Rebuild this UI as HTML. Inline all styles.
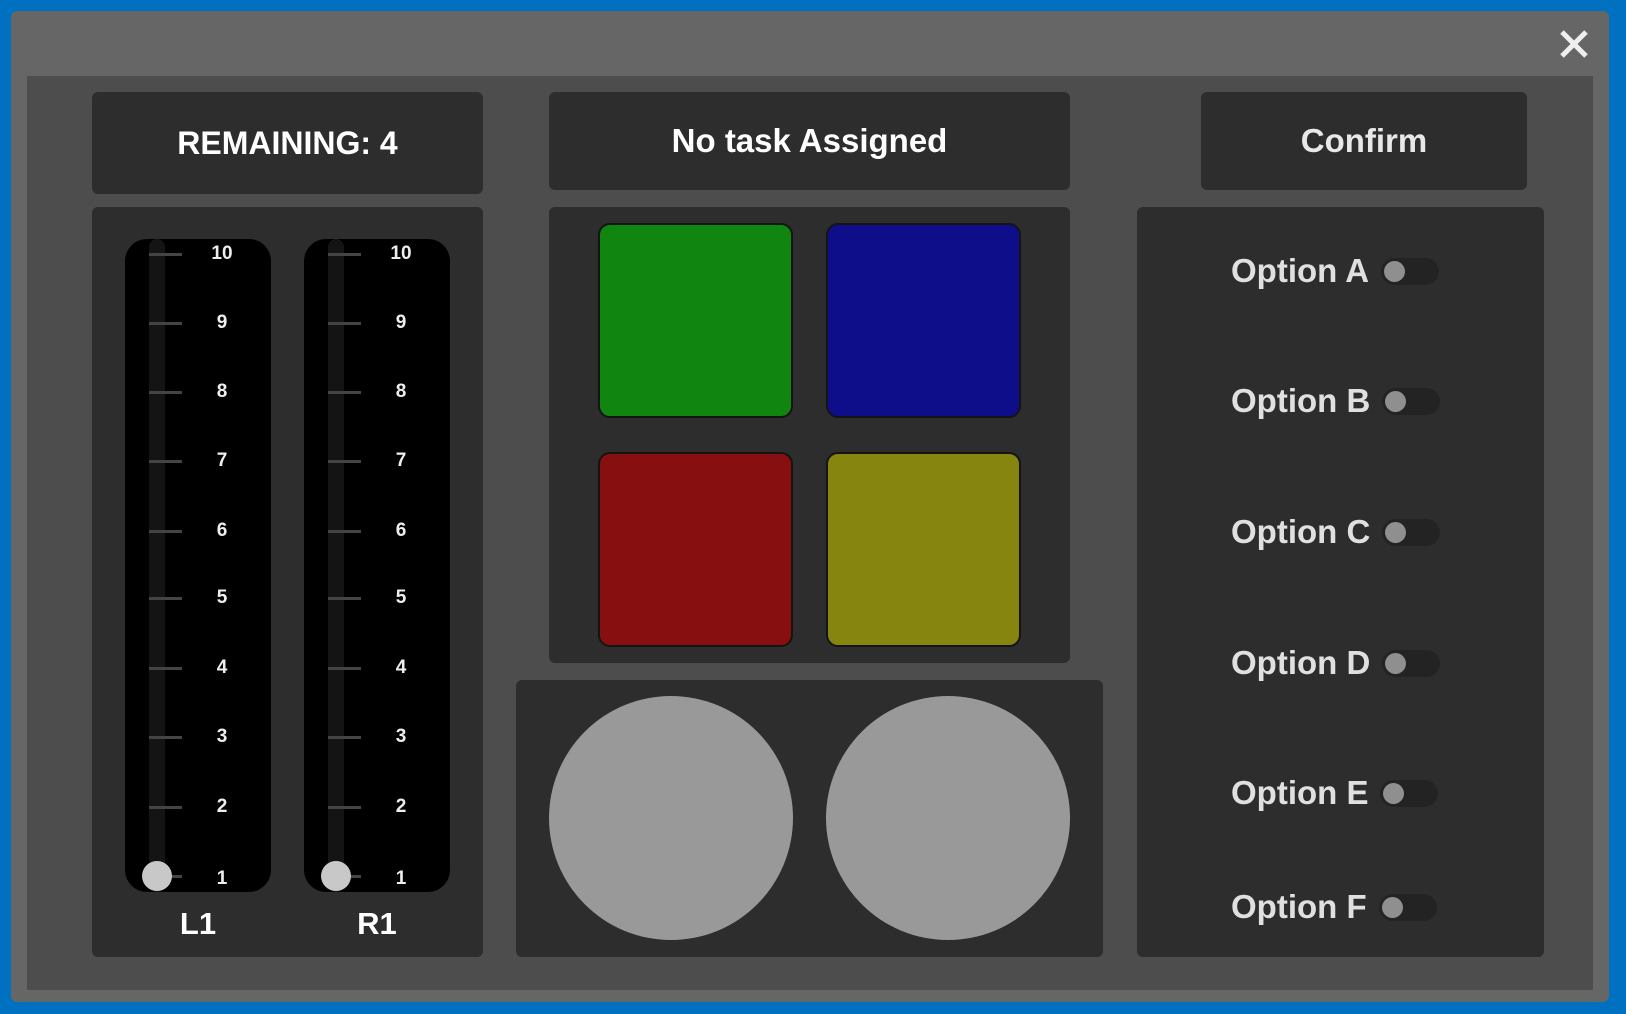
<!DOCTYPE html>
<html><head><meta charset="utf-8"><style>
*{margin:0;padding:0;box-sizing:border-box}
body{width:1626px;height:1014px;background:#0070c0;position:relative;overflow:hidden;font-family:"Liberation Sans","DejaVu Sans",sans-serif;color:#eee}
.a{position:absolute}
.box{position:absolute;background:#2d2d2d;border-radius:6px}
.txt{display:flex;align-items:center;justify-content:center;font-weight:bold}
.sq{position:absolute;width:195px;height:195px;border-radius:12px;border:2px solid #141414}
.circ{position:absolute;width:244px;height:244px;border-radius:50%;background:#999}
.sl{position:absolute;top:239px;width:146px;height:653px;background:#000;border-radius:22px}
.track{position:absolute;left:24px;top:0;width:16px;height:653px;background:#141414;border-radius:8px}
.tick{position:absolute;left:24px;width:33px;height:3px;background:#444}
.num{position:absolute;width:40px;text-align:center;font-size:19px;font-weight:bold;color:#eee;transform:translateY(-50%)}
.knob{position:absolute;left:17px;width:30px;height:30px;border-radius:50%;background:#c8c8c8}
.opt{position:absolute;left:1231px;display:flex;align-items:center;font-size:33px;font-weight:bold;color:#e0e0e0;transform:translateY(-50%)}
.tg{margin-left:12px;width:58px;height:27px;border-radius:14px;background:#232323;position:relative}
.tg::after{content:"";position:absolute;left:3px;top:3px;width:21px;height:21px;border-radius:50%;background:#8f8f8f}
</style></head><body>
<div class="a" style="left:11px;top:11px;width:1598px;height:991px;background:#666;border-radius:6px"></div>
<div class="a" style="left:27px;top:76px;width:1566px;height:914px;background:#4d4d4d"></div>
<svg class="a" style="left:1558px;top:28px" width="32" height="32" viewBox="0 0 32 32"><path d="M4 4L28 28M28 4L4 28" stroke="#eee" stroke-width="5"/></svg>

<div class="box txt" style="left:92px;top:92px;width:391px;height:102px;font-size:32px;color:#fff">REMAINING: 4</div>
<div class="box txt" style="left:549px;top:92px;width:521px;height:98px;font-size:33px;color:#fff">No task Assigned</div>
<div class="box txt" style="left:1201px;top:92px;width:326px;height:98px;font-size:33px;color:#e8e8e8">Confirm</div>

<div class="box" style="left:92px;top:207px;width:391px;height:750px"></div>
<div class="sl" style="left:125px"><div class="track"></div></div>
<div class="sl" style="left:304px"><div class="track"></div></div>
<div class="a" style="left:160px;top:906px;width:76px;text-align:center;font-size:31px;font-weight:bold;color:#fff">L1</div>
<div class="a" style="left:339px;top:906px;width:76px;text-align:center;font-size:31px;font-weight:bold;color:#fff">R1</div>

<div class="box" style="left:549px;top:207px;width:521px;height:456px"></div>
<div class="sq" style="left:598px;top:223px;background:#108510"></div>
<div class="sq" style="left:826px;top:223px;background:#0e0e8a"></div>
<div class="sq" style="left:598px;top:452px;background:#870f0f"></div>
<div class="sq" style="left:826px;top:452px;background:#858510"></div>

<div class="box" style="left:516px;top:680px;width:587px;height:277px"></div>
<div class="circ" style="left:549px;top:696px"></div>
<div class="circ" style="left:826px;top:696px"></div>

<div class="box" style="left:1137px;top:207px;width:407px;height:750px"></div>
<div class="opt" style="top:271px">Option A<div class="tg"></div></div>
<div class="opt" style="top:401px">Option B<div class="tg"></div></div>
<div class="opt" style="top:532px">Option C<div class="tg"></div></div>
<div class="opt" style="top:663px">Option D<div class="tg"></div></div>
<div class="opt" style="top:793px">Option E<div class="tg"></div></div>
<div class="opt" style="top:907px">Option F<div class="tg"></div></div>

<div class="tick" style="left:149px;top:253px"></div><div class="num" style="left:202px;top:254px">10</div>
<div class="tick" style="left:149px;top:322px"></div><div class="num" style="left:202px;top:323px">9</div>
<div class="tick" style="left:149px;top:391px"></div><div class="num" style="left:202px;top:392px">8</div>
<div class="tick" style="left:149px;top:460px"></div><div class="num" style="left:202px;top:461px">7</div>
<div class="tick" style="left:149px;top:530px"></div><div class="num" style="left:202px;top:531px">6</div>
<div class="tick" style="left:149px;top:597px"></div><div class="num" style="left:202px;top:598px">5</div>
<div class="tick" style="left:149px;top:667px"></div><div class="num" style="left:202px;top:668px">4</div>
<div class="tick" style="left:149px;top:736px"></div><div class="num" style="left:202px;top:737px">3</div>
<div class="tick" style="left:149px;top:806px"></div><div class="num" style="left:202px;top:807px">2</div>
<div class="tick" style="left:149px;top:875px"></div><div class="num" style="left:202px;top:879px">1</div>
<div class="knob" style="left:142px;top:861px"></div>
<div class="tick" style="left:328px;top:253px"></div><div class="num" style="left:381px;top:254px">10</div>
<div class="tick" style="left:328px;top:322px"></div><div class="num" style="left:381px;top:323px">9</div>
<div class="tick" style="left:328px;top:391px"></div><div class="num" style="left:381px;top:392px">8</div>
<div class="tick" style="left:328px;top:460px"></div><div class="num" style="left:381px;top:461px">7</div>
<div class="tick" style="left:328px;top:530px"></div><div class="num" style="left:381px;top:531px">6</div>
<div class="tick" style="left:328px;top:597px"></div><div class="num" style="left:381px;top:598px">5</div>
<div class="tick" style="left:328px;top:667px"></div><div class="num" style="left:381px;top:668px">4</div>
<div class="tick" style="left:328px;top:736px"></div><div class="num" style="left:381px;top:737px">3</div>
<div class="tick" style="left:328px;top:806px"></div><div class="num" style="left:381px;top:807px">2</div>
<div class="tick" style="left:328px;top:875px"></div><div class="num" style="left:381px;top:879px">1</div>
<div class="knob" style="left:321px;top:861px"></div>
</body></html>
